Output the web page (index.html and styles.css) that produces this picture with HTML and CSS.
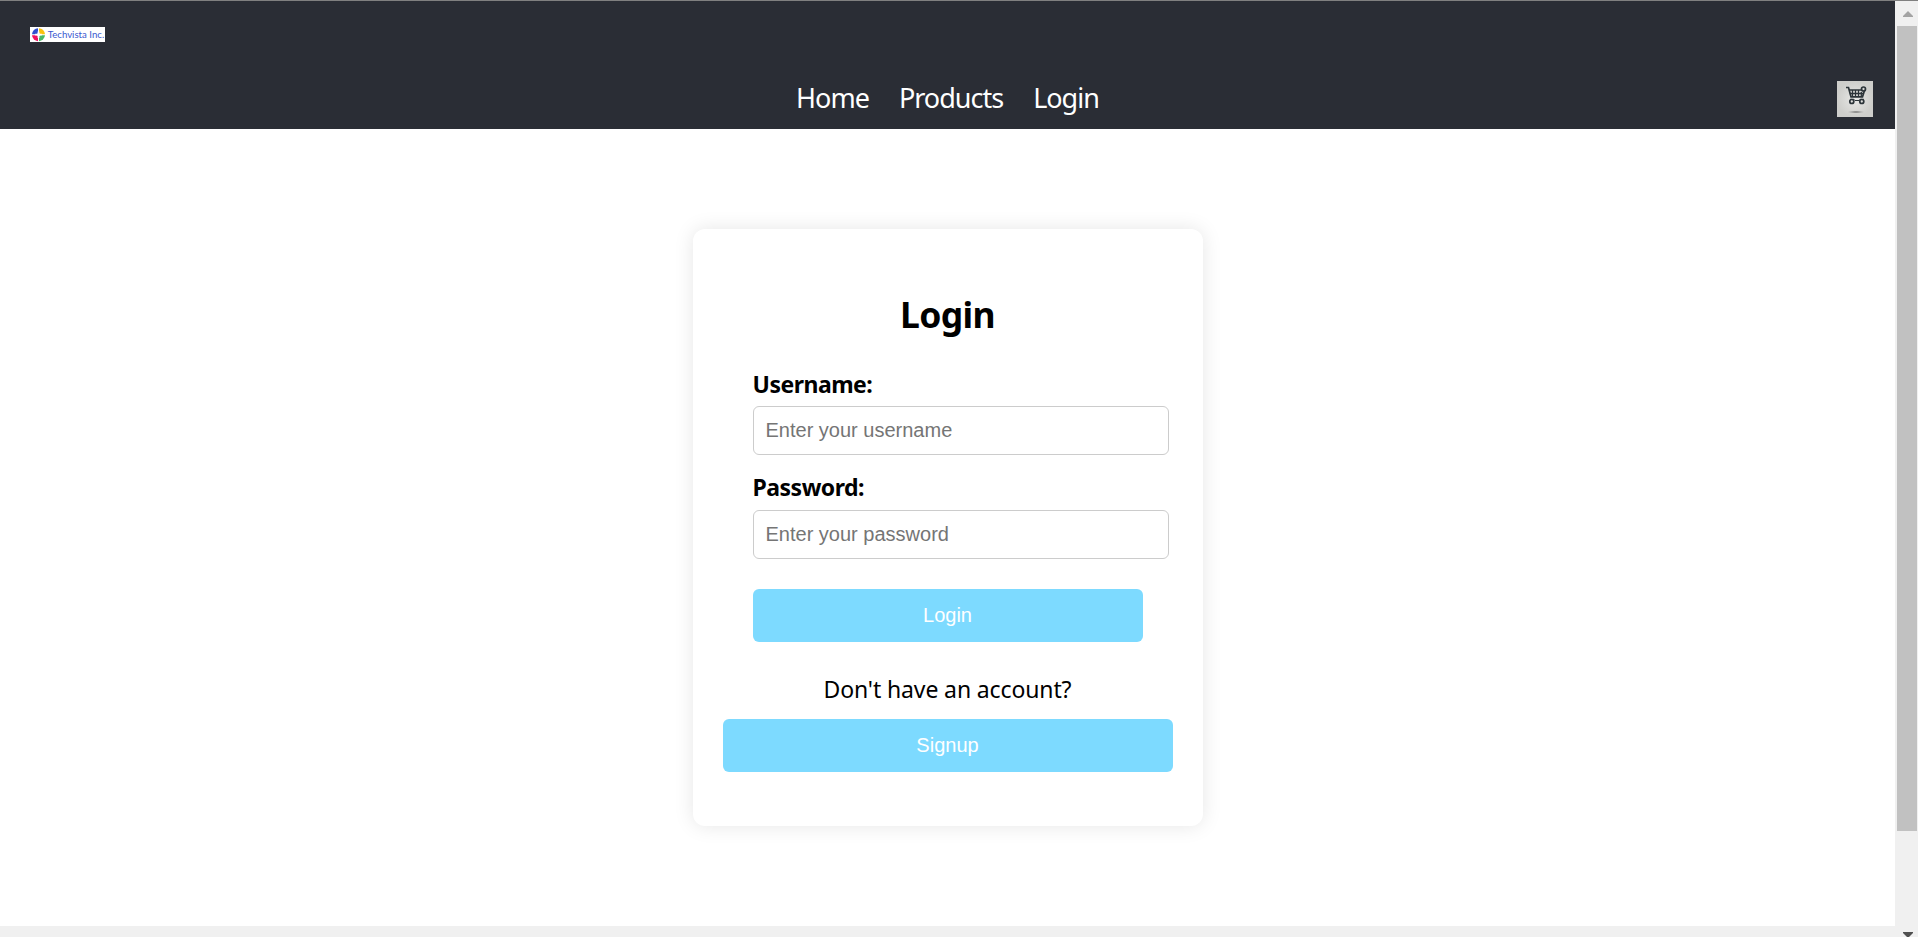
FILE: index.html
```html
<!DOCTYPE html>
<html lang="en">
<head>
<meta charset="utf-8">
<title>Login - Techvista Inc.</title>
<link rel="stylesheet" href="styles.css">
</head>
<body>
<div class="window">
  <div class="page">
    <header class="header">
      <svg class="logo" viewBox="0 0 75 15">
        <rect width="75" height="15" fill="#fff"/>
        <path d="M2 7.200A6.500 6.500 0 0 1 8 1.200V6L7 7.200Z" fill="#2f4fd0"/>
        <path d="M9 1.200A6.500 6.500 0 0 1 15 7.200H10.300L9 6Z" fill="#f8c20c"/>
        <path d="M2 8.200H7L8 9.300V14.200A6.500 6.500 0 0 1 2 8.200Z" fill="#ee1260"/>
        <path d="M15 8.200A6.500 6.500 0 0 1 9 14.200V9.300L10.300 8.200Z" fill="#48b765"/>
        <path d="M8.500 4.500V11M5.200 7.700H11.800" stroke="#fff" stroke-width="1.800"/>
        <text class="logo-text" x="17.700" y="11.400" textLength="56.500" lengthAdjust="spacingAndGlyphs">Techvista Inc.</text>
      </svg>
      <div class="bar">
        <nav class="nav">
          <a class="link home">Home</a>
          <a class="link products">Products</a>
          <a class="link signin">Login</a>
        </nav>
        <svg class="cart" viewBox="0 0 36 36">
          <defs>
            <radialGradient id="paper"><stop offset="0" stop-color="#e8e8e6"/><stop offset="1" stop-color="#cececb"/></radialGradient>
            <radialGradient id="shade"><stop offset="0" stop-color="#555"/><stop offset="1" stop-color="#aaa" stop-opacity="0"/></radialGradient>
          </defs>
          <rect width="36" height="36" fill="url(#paper)"/>
          <g fill="none" stroke="#2c3439" stroke-width="1.700">
            <path d="M9 6.500H11.500L14 15.800H25.500L27.500 9.500"/>
            <path d="M12 9H24M12.800 12.500H26.500M15.500 9V15M18.500 9V15M21.500 9V15M24.300 11V15" stroke-width="1.300"/>
            <circle cx="26.500" cy="8" r="2"/>
            <circle cx="14.800" cy="20.500" r="2"/>
            <circle cx="24.800" cy="20.500" r="2"/>
            <path d="M13 18.300H17L18 19.500H22L23 18.300H27" stroke-width="1"/>
          </g>
          <ellipse cx="19" cy="31" rx="9" ry="1.500" fill="url(#shade)"/>
        </svg>
      </div>
    </header>
    <main class="main">
      <section class="card">
        <h2 class="title">Login</h2>
        <form class="form">
          <label class="label user" for="username">Username:</label>
          <input class="input" id="username" type="text" placeholder="Enter your username">
          <label class="label pass" for="password">Password:</label>
          <input class="input" id="password" type="password" placeholder="Enter your password">
          <button class="button submit" type="button">Login</button>
        </form>
        <p class="question">Don't have an account?</p>
        <button class="button" type="button">Signup</button>
      </section>
    </main>
    <div class="bottom"></div>
  </div>
  <div class="scrollbar">
    <svg class="arrow" viewBox="0 0 10 6"><path d="M0 6V5L5 0L10 5V6Z" fill="#a3a3a3"/></svg>
    <div class="thumb"></div>
    <svg class="arrow" viewBox="0 0 10 6"><path d="M0 0V1L5 6L10 1V0Z" fill="#505050"/></svg>
  </div>
</div>
</body>
</html>
```
FILE: styles.css
```css
* { box-sizing: border-box; }
body { margin: 0; background: #fff; font-family: "Segoe UI", "Noto Sans", sans-serif; color: #000; overflow: hidden; }
.window { display: flex; height: 937px; border-top: 1px solid #808080; }
.page { width: 1895px; display: flex; flex-direction: column; }
.header { height: 128px; background: #2a2d35; padding: 26px 22px 12px 30px; display: flex; flex-direction: column; justify-content: space-between; }
.logo { display: block; width: 75px; height: 15px; }
.logo-text { font: 10px Lato, sans-serif; fill: #3a58d0; }
.bar { display: grid; grid-template-columns: 36px 1fr 36px; height: 36px; align-items: center; }
.nav { grid-column: 2; display: flex; justify-content: center; gap: 30px; padding: 0 8px 2px 0; }
.link { color: #fff; font-size: 27px; line-height: 34px; white-space: nowrap; letter-spacing: -1px; }
.cart { display: block; width: 36px; height: 36px; }
.main { height: 797px; padding-top: 100px; display: flex; justify-content: center; align-items: flex-start; }
.card { width: 510px; height: 597px; padding: 58px 30px 55px; border-radius: 12px; box-shadow: 0 0 20px rgba(0, 0, 0, .1); background: #fff; display: flex; flex-direction: column; }
.title { margin: 0; height: 54px; line-height: 54px; font-size: 35.5px; text-align: center; letter-spacing: -0.6px; }
.form { padding: 0 30px; margin-top: 27px; display: flex; flex-direction: column; }
.label { font-size: 23px; font-weight: 700; line-height: 32px; height: 32px; letter-spacing: -0.5px; }
.user { margin-bottom: 6px; }
.pass { margin: 16px 0 7px; }
.input { width: 416px; height: 49px; padding: 12px; border: 1px solid #ccc; border-radius: 6px; font: 20px "Liberation Sans", Arial, sans-serif; background: #fff; }
.input::placeholder { color: #757575; }
.button { width: 100%; height: 53px; flex: none; border: 0; border-radius: 6px; padding: 0; background: #7ddaff; color: #fff; font: 20px "Liberation Sans", Arial, sans-serif; }
.submit { margin-top: 30px; }
.question { margin: 31px 0 14px; height: 32px; line-height: 32px; font-size: 23px; text-align: center; letter-spacing: -0.12px; }
.bottom { flex: 1; background: #f0f0f0; }
.scrollbar { width: 23px; background: #f0f0f0; display: flex; flex-direction: column; align-items: center; padding-top: 10px; }
.arrow { display: block; width: 10px; height: 6px; margin-left: 2px; flex: none; }
.thumb { width: 20px; height: 805px; margin: 9px 0 101px 1px; background: #c1c1c1; flex: none; }
```
